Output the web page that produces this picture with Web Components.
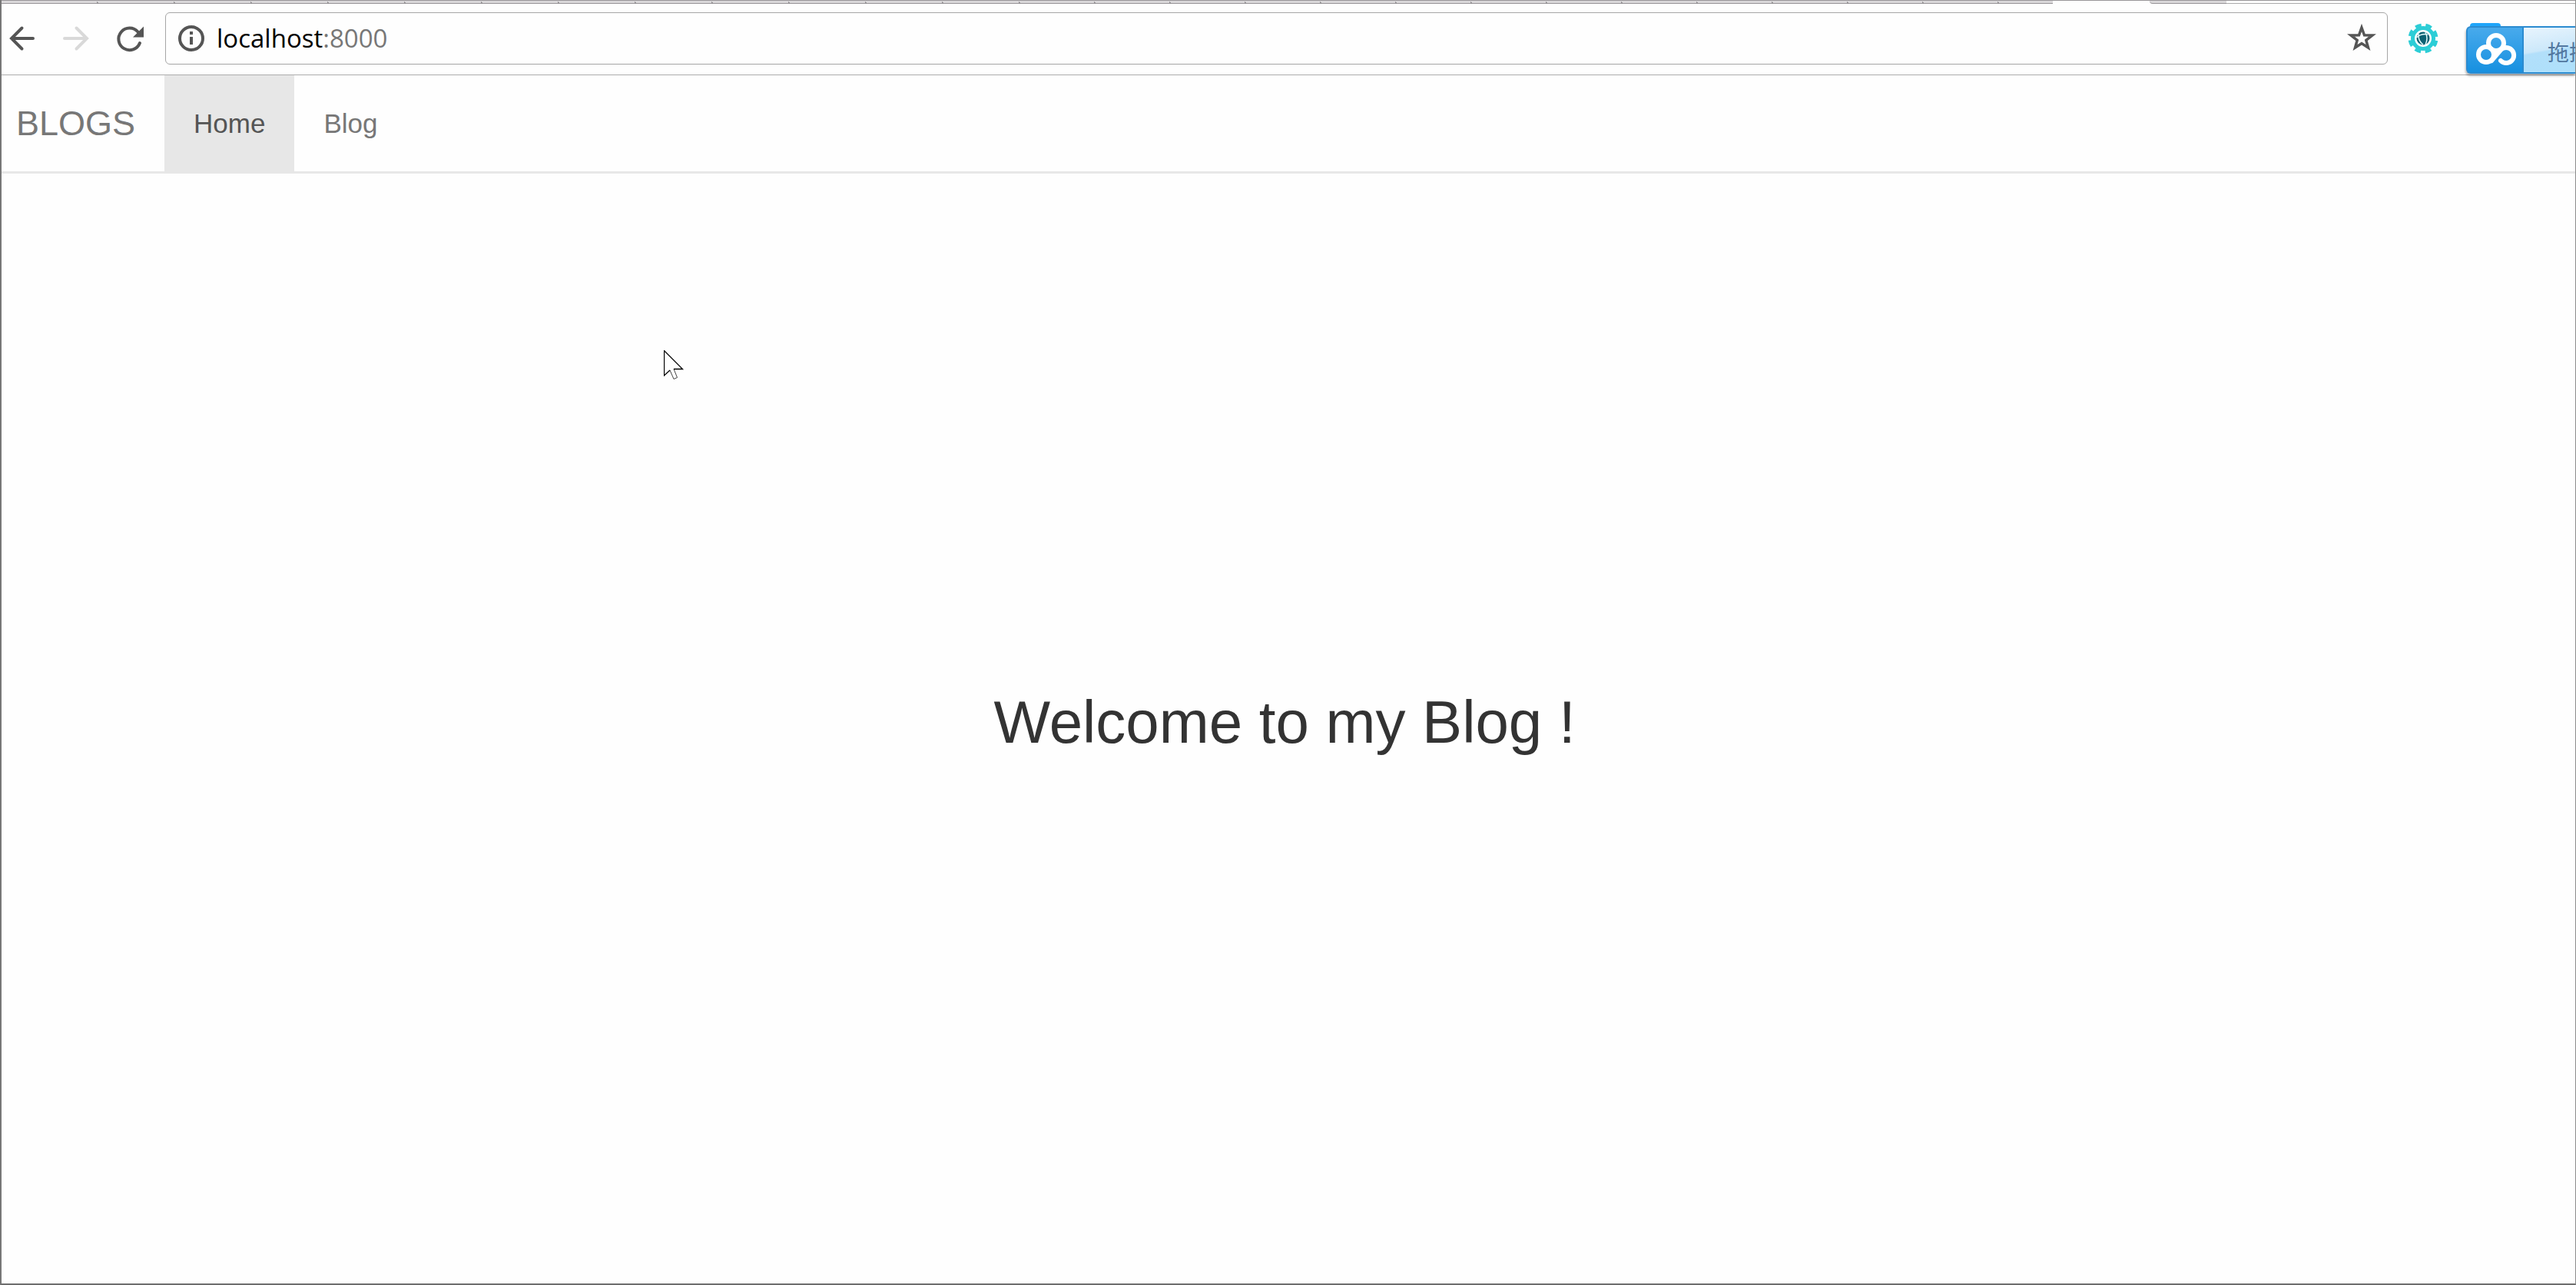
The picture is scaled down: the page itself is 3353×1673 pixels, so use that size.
<!DOCTYPE html>
<html lang="en">
<head>
<meta charset="utf-8">
<title>Blogs</title>
<style>
html, body { height: 100%; margin: 0; }
body { font-family: "Liberation Sans", Arial, sans-serif; background: #fefefe; color: #333; overflow: hidden; }
</style>
</head>
<body>
<browser-window>
  <tab-strip slot="chrome"></tab-strip>
  <browser-toolbar slot="chrome"></browser-toolbar>
  <site-nav>
    <nav-link href="#home" active>Home</nav-link>
    <nav-link href="#blog">Blog</nav-link>
  </site-nav>
  <welcome-hero>Welcome to my Blog !</welcome-hero>
</browser-window>
<mouse-pointer></mouse-pointer>
<script>
function define(name, html) {
  const template = document.createElement('template');
  template.innerHTML = html;
  customElements.define(name, class extends HTMLElement {
    constructor() {
      super();
      this.attachShadow({ mode: 'open' }).append(template.content.cloneNode(true));
    }
    connectedCallback() {
      const link = this.shadowRoot.querySelector('a[data-forward]');
      if (link) link.href = this.getAttribute('href');
    }
  });
}

define('browser-window', `
<style>
:host { display: flex; flex-direction: column; height: 100%; box-sizing: border-box;
  border: solid #777; border-width: 0 1px 2px 2px; border-bottom-color: #6e6e6e; border-right-color: #8c8c8c; }
main { flex: 1; display: flex; flex-direction: column; min-height: 0; }
</style>
<slot name="chrome"></slot>
<main><slot></slot></main>`);

define('tab-strip', `
<style>
:host { display: flex; height: 5px; box-sizing: border-box; border-top: 1px solid #989598; }
.tabs { display: flex; flex: 2670; background: #d9d7d9; border-bottom: 1px solid #989598; }
.first { flex: 124; } .wide { flex: 100; } .tab { flex: 98; } .last { flex: 72; }
i { display: block; box-sizing: border-box; }
.wide, .tab, .last { background: linear-gradient(45deg, transparent 1px, #989598 1px, #989598 2px, transparent 2px) left / 4px 4px no-repeat; }
.active { flex: 126; background: #fefefe; }
.next { flex: 100; background: #d9d7d9; border-bottom: 1px solid #989598; border-radius: 0 0 0 4px; }
.rest { flex: 454; background: #fefefe; border-bottom: 1px solid #aaa; }
</style>
<div class="tabs"><i class="first"></i>${'<i class="wide"></i>'.repeat(12)}${'<i class="tab"></i>'.repeat(13)}<i class="last"></i></div>
<i class="active"></i><i class="next"></i><i class="rest"></i>`);

define('browser-toolbar', `
<style>
:host { display: flex; align-items: center; height: 93px; box-sizing: border-box; border-bottom: 1px solid #acacac;
  padding: 0 0 2px 4px; }
button { border: 0; padding: 0; margin: 0; background: none; display: block; flex: none; }
svg { display: block; }
.nav { display: flex; gap: 22px; margin-right: 21px; }
.field { flex: 1; display: flex; align-items: center; height: 68px; box-sizing: border-box; margin-top: -1px;
  border: 1px solid #a6a6a6; border-radius: 6px; padding: 0 12px; }
.url { flex: 1; margin-left: 12px; font: 33px/44px "Open Sans", "Noto Sans", sans-serif; color: #777; }
.url b { font-weight: 400; color: #000; }
.ext { margin-left: 24px; }
upload-badge { align-self: flex-start; margin: 29px 0 0 34px; }
</style>
<div class="nav">
<button aria-label="Back"><svg width="48" height="48" fill="none" stroke="#555" stroke-width="4" stroke-linecap="round"><path d="M9 24H37M22.500 10.500 9 24 22.500 37.500"/></svg></button>
<button aria-label="Forward" disabled><svg width="48" height="48" fill="none" stroke="#d9d9d9" stroke-width="4" stroke-linecap="round"><path d="M8 24H36M23.500 10.500 37 24 23.500 37.500"/></svg></button>
<button aria-label="Reload"><svg width="48" height="48"><path d="M36 30A14.300 14.300 0 1 1 33.500 15.500" fill="none" stroke="#555" stroke-width="4" stroke-linecap="round"/><path d="M41 8.500V22.500H27Z" fill="#555"/></svg></button>
</div>
<div class="field">
<button aria-label="Site information"><svg width="42" height="42"><circle cx="21" cy="21" r="15" fill="none" stroke="#555" stroke-width="4"/><path d="M19 19h4v10h-4zM19 12h4v4h-4z" fill="#555"/></svg></button>
<div class="url"><b>localhost</b>:8000</div>
<button aria-label="Bookmark"><svg width="42" height="42"><path d="M21 7 24.500 16.800 35 17 26.800 23.400 29.500 33 21 27.500 12.500 33 15.200 23.400 7 17 17.500 16.800Z" fill="none" stroke="#555" stroke-width="3.500"/></svg></button>
</div>
<button class="ext" aria-label="Extension"><svg width="44" height="44" viewBox="-22 -22 44 44">
<circle r="13.500" fill="#fff" stroke="#2ccdd6" stroke-width="5"/><circle r="17.500" fill="none" stroke="#2ccdd6" stroke-width="4" stroke-dasharray="8 5.744" transform="rotate(9.400)"/>
<circle r="8.500" fill="#0d6273"/><path d="M-9-1Q-2-7 6-5M-6-6Q-7 3 0 8M3-8Q7 0 3 8" fill="none" stroke="#e4fafb" stroke-width="1.500"/></svg></button>
<upload-badge></upload-badge>`);

define('upload-badge', `
<style>
:host { display: block; flex: none; width: 142px; height: 62px; position: relative; }
.tip { position: absolute; left: 5px; top: -4px; width: 40px; height: 6px; border-radius: 4px 4px 0 0; background: #1fa5fa; }
button { position: relative; display: flex; width: 100%; height: 62px; box-sizing: border-box; padding: 0; margin: 0; overflow: hidden;
  border: solid #2b8bd0; border-width: 2px 0 2px 2px; border-radius: 6px 0 0 6px; background: #2b8bd0; box-shadow: -1px 3px 3px #0004; }
.logo { width: 71px; height: 58px; flex: none; background: linear-gradient(#48aaec, #1790e0); }
.label { flex: 1; height: 58px; margin-left: 2px; padding-left: 31px; overflow: hidden; white-space: nowrap; text-align: left;
  background: linear-gradient(170deg, #e8f4fd, #cce8fa 48%, #b2dffa 52%, #aee0fb); color: #52779f; font: 28px/62px "Noto Sans CJK SC", sans-serif; }
</style>
<div class="tip"></div>
<button><span class="logo"><svg width="71" height="58" fill="none" stroke="#fff" stroke-width="6"><circle cx="37" cy="20" r="10"/><circle cx="24" cy="35" r="10"/><path d="M31 43 43 29A10 10 0 1 1 43 43" stroke-linecap="round"/></svg></span><span class="label">拖拽</span></button>`);

define('site-nav', `
<style>
:host { display: block; border-bottom: 3px solid #e7e7e7; }
nav { display: flex; height: 125px; align-items: stretch; padding-left: 19px; }
.brand { display: flex; align-items: center; padding-right: 38px; font-size: 45px; color: #777; text-decoration: none; }
</style>
<nav><a class="brand" href="#home">BLOGS</a><slot></slot></nav>`);

define('nav-link', `
<style>
:host { display: flex; }
a { display: flex; align-items: center; padding: 0 38px; font-size: 35px; color: #777; text-decoration: none; }
:host([active]) a { background: #e7e7e7; color: #555; }
</style>
<a data-forward><slot></slot></a>`);

define('welcome-hero', `
<style>
:host { flex: 1; display: flex; align-items: center; justify-content: center; padding: 0 10px 18px 0; }
h1 { margin: 0; font-size: 78px; line-height: 88px; font-weight: 400; color: #333; }
</style>
<h1><slot></slot></h1>`);

define('mouse-pointer', `
<style>:host { position: absolute; left: 864px; top: 456px; pointer-events: none; } svg { display: block; }</style>
<svg width="28" height="40"><path d="M.5.500V33L8 26 13 37.500 17.500 35.500 13 24.500H24.500Z" fill="#fff"/><path d="M8 26 13 37.500 17.500 35.500 13 24.500" fill="none" stroke="#444"/><path d="M8 26 .5 33V.500L24.500 24.500H13" fill="none" stroke="#000" stroke-width="1.300"/></svg>`);
</script>
</body>
</html>
